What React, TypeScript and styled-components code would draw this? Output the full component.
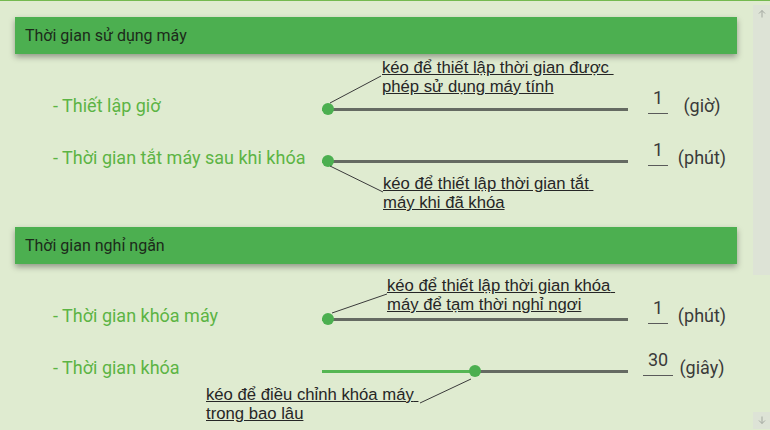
import styled, { createGlobalStyle } from "styled-components";

const GlobalStyle = createGlobalStyle`
  html, body {
    margin: 0;
    padding: 0;
  }
  body {
    background: #dfebd0;
    font-family: Roboto, "Noto Sans", sans-serif;
    overflow: hidden;
  }
`;

type Tip = {
  lines: string[];
  x: number;
  y: number;
  leader: [number, number, number, number];
};

type Setting = {
  label: string;
  value: number;
  unit: string;
  ratio: number;
  tip: Tip;
};

const sections: { title: string; rows: Setting[] }[] = [
  {
    title: "Thời gian sử dụng máy",
    rows: [
      {
        label: "- Thiết lập giờ",
        value: 1,
        unit: "(giờ)",
        ratio: 0,
        tip: {
          lines: ["kéo để thiết lập thời gian được", "phép sử dụng máy tính"],
          x: 60,
          y: -51,
          leader: [8, -6, 59, -33],
        },
      },
      {
        label: "- Thời gian tắt máy sau khi khóa",
        value: 1,
        unit: "(phút)",
        ratio: 0,
        tip: {
          lines: ["kéo để thiết lập thời gian tắt", "máy khi đã khóa"],
          x: 61,
          y: 13,
          leader: [8, 5, 61, 31],
        },
      },
    ],
  },
  {
    title: "Thời gian nghỉ ngắn",
    rows: [
      {
        label: "- Thời gian khóa máy",
        value: 1,
        unit: "(phút)",
        ratio: 0,
        tip: {
          lines: ["kéo để thiết lập thời gian khóa", "máy để tạm thời nghỉ ngơi"],
          x: 65,
          y: -43,
          leader: [10, -6, 65, -25],
        },
      },
      {
        label: "- Thời gian khóa",
        value: 30,
        unit: "(giây)",
        ratio: 0.5,
        tip: {
          lines: ["kéo để điều chỉnh khóa máy", "trong bao lâu"],
          x: -116,
          y: 14,
          leader: [98, 32, 149, 8],
        },
      },
    ],
  },
];

function App() {
  return (
    <Page>
      <GlobalStyle />
      <Content>
        {sections.map((s) => (
          <section key={s.title}>
            <Header>{s.title}</Header>
            <Rows>
              {s.rows.map((r) => (
                <Row key={r.label}>
                  <Label>{r.label}</Label>
                  <Slider>
                    <Track />
                    <Fill style={{ width: `calc(${r.ratio} * (100% - 12px) + 6px)` }} />
                    <Thumb style={{ left: `calc(${r.ratio} * (100% - 12px))` }} />
                    <Leader width="1" height="1">
                      <line
                        x1={r.tip.leader[0]}
                        y1={r.tip.leader[1]}
                        x2={r.tip.leader[2]}
                        y2={r.tip.leader[3]}
                        stroke="#3a3a3a"
                        strokeWidth="1"
                      />
                    </Leader>
                    <TipBox $x={r.tip.x} $y={r.tip.y}>
                      {r.tip.lines.map((l, i) => (
                        <div key={i}>
                          {l}
                          {i === 0 ? "\u00a0" : ""}
                        </div>
                      ))}
                    </TipBox>
                  </Slider>
                  <ValueCell>
                    <ValueText>{r.value}</ValueText>
                  </ValueCell>
                  <Unit>{r.unit}</Unit>
                </Row>
              ))}
            </Rows>
          </section>
        ))}
      </Content>
      <ScrollBar>
        <ScrollButton>
          <svg width="8" height="9" viewBox="0 0 8 9">
            <path d="M4 1.5V8.5M1 4.5L4 1.5L7 4.5" fill="none" stroke="#a3a8a0" strokeWidth="1" />
          </svg>
        </ScrollButton>
        <ScrollThumb />
        <ScrollSpace />
        <ScrollButton>
          <svg width="8" height="9" viewBox="0 0 8 9">
            <path d="M4 0.5V7.5M1 4.5L4 7.5L7 4.5" fill="none" stroke="#a3a8a0" strokeWidth="1" />
          </svg>
        </ScrollButton>
      </ScrollBar>
    </Page>
  );
}

const Page = styled.div`
  display: flex;
  height: 430px;
  box-sizing: border-box;
  border-top: 1px solid #74b94f;
  overflow: hidden;
`;

const Content = styled.div`
  flex: 1;
  padding: 16px 16px 0 15px;
`;

const Header = styled.div`
  height: 37px;
  display: flex;
  align-items: center;
  padding: 0 10px;
  background: #4caf50;
  color: #1c2a1a;
  font-size: 16px;
  box-shadow: 0 3px 6px rgba(0, 0, 0, 0.35);
`;

const Rows = styled.div`
  padding: 29px 0 40px 38px;
`;

const Row = styled.div`
  display: flex;
  align-items: center;
  height: 52px;
`;

const Label = styled.div`
  width: 269px;
  flex: none;
  padding-bottom: 7px;
  font-size: 18px;
  color: #5cb444;
  white-space: nowrap;
`;

const Slider = styled.div`
  position: relative;
  width: 306px;
  height: 12px;
  flex: none;
`;

const Track = styled.div`
  position: absolute;
  left: 0;
  right: 0;
  top: 4.5px;
  height: 3px;
  background: #656a62;
`;

const Fill = styled.div`
  position: absolute;
  left: 0;
  top: 4.5px;
  height: 3px;
  background: #55b653;
`;

const Thumb = styled.div`
  position: absolute;
  top: 0;
  width: 12px;
  height: 12px;
  border-radius: 50%;
  background: #4caf50;
`;

const Leader = styled.svg`
  position: absolute;
  left: 0;
  top: 6px;
  overflow: visible;
  pointer-events: none;
`;

const TipBox = styled.div<{ $x: number; $y: number }>`
  position: absolute;
  left: ${(p) => p.$x}px;
  top: calc(6px + ${(p) => p.$y}px);
  font-family: "Liberation Sans", Arial, sans-serif;
  font-size: 16.7px;
  line-height: 19px;
  color: #262626;
  text-decoration: underline;
  white-space: nowrap;
`;

const ValueCell = styled.div`
  width: 30px;
  flex: none;
  margin-left: 15px;
  align-self: flex-start;
  margin-top: 4px;
  display: flex;
  justify-content: center;
`;

const ValueText = styled.span`
  padding: 0 5px 5px;
  font-size: 18px;
  line-height: 21px;
  color: #3a3a3a;
  border-bottom: 1px solid #5a5a5a;
`;

const Unit = styled.div`
  width: 58px;
  flex: none;
  padding-bottom: 8px;
  text-align: center;
  font-size: 18px;
  color: #3a3a3a;
  white-space: nowrap;
`;

const ScrollBar = styled.div`
  width: 17px;
  flex: none;
  display: flex;
  flex-direction: column;
  padding: 4px 0 1px;
`;

const ScrollButton = styled.div`
  height: 17px;
  display: flex;
  align-items: center;
  justify-content: center;
  background: #dde3d6;
`;

const ScrollThumb = styled.div`
  height: 253px;
  background: #dde3d6;
`;

const ScrollSpace = styled.div`
  flex: 1;
`;

export default App;
